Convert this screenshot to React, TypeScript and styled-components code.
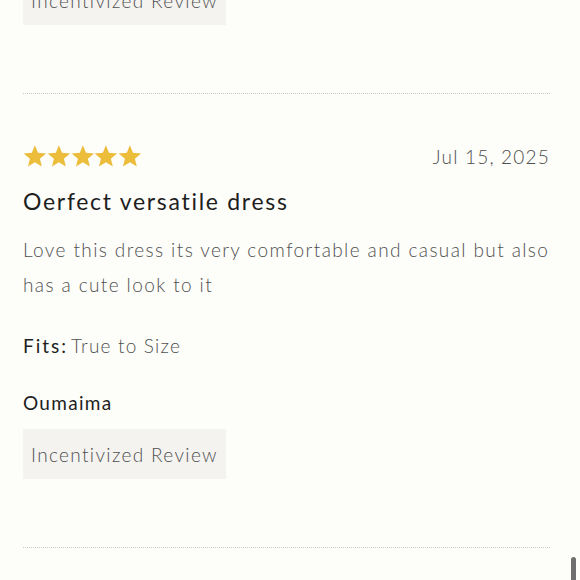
import styled, { createGlobalStyle } from 'styled-components';

const GlobalStyle = createGlobalStyle`
  html, body {
    margin: 0;
    padding: 0;
    background: #fdfdf9;
    overflow: hidden;
  }
  body {
    font-family: Lato, "Noto Sans", sans-serif;
    -webkit-font-smoothing: antialiased;
  }
`;

type Review = {
  date: string;
  title: string;
  body: string;
  fits: string;
  author: string;
};

const review: Review = {
  date: 'Jul 15, 2025',
  title: 'Oerfect versatile dress',
  body: 'Love this dress its very comfortable and casual but also has a cute look to it',
  fits: 'True to Size',
  author: 'Oumaima',
};

const Stars = ({ count }: { count: number }) => (
  <StarRow>
    {Array.from({ length: count }).map((_, i) => (
      <svg key={i} width="24" height="24" viewBox="0 0 24 24">
        <path
          d="M12 1.2l3.1 7.6 8.2.6-6.3 5.3 2 8-7-4.4-7 4.4 2-8L.7 9.4l8.2-.6z"
          fill="#ebbd3b"
        />
      </svg>
    ))}
  </StarRow>
);

const App = () => {
  return (
    <>
      <GlobalStyle />
      <Page>
        <Badge>Incentivized Review</Badge>
        <Divider />
        <ReviewCard>
          <Header>
            <Stars count={5} />
            <DateText>{review.date}</DateText>
          </Header>
          <Title>{review.title}</Title>
          <Body>{review.body}</Body>
          <Fits>
            <strong>Fits:</strong>
            {review.fits}
          </Fits>
          <Author>{review.author}</Author>
          <Badge>Incentivized Review</Badge>
        </ReviewCard>
        <Divider />
      </Page>
      <ScrollThumb />
    </>
  );
};

const Page = styled.div`
  margin-top: -25px;
  padding: 0 30px 0 23px;
  display: flex;
  flex-direction: column;
  align-items: flex-start;
`;

const Divider = styled.hr`
  align-self: stretch;
  margin: 68px 0 0;
  border: none;
  border-top: 1px dotted #c9c9c6;
  height: 0;
`;

const ReviewCard = styled.div`
  align-self: stretch;
  padding-top: 50px;
  display: flex;
  flex-direction: column;
  align-items: flex-start;
`;

const Header = styled.div`
  align-self: stretch;
  display: flex;
  justify-content: space-between;
  align-items: center;
  height: 24px;
`;

const StarRow = styled.div`
  display: flex;
  svg {
    display: block;
    width: 23.8px;
    height: 24px;
  }
`;

const DateText = styled.span`
  font-size: 19px;
  font-weight: 300;
  color: #4f4f4f;
  letter-spacing: 1.2px;
`;

const Title = styled.h2`
  margin: 19px 0 0;
  font-size: 23px;
  font-weight: 400;
  line-height: 28px;
  color: #1e1e1e;
  letter-spacing: 1.7px;
`;

const Body = styled.p`
  margin: 17px 0 0;
  font-size: 19px;
  font-weight: 300;
  line-height: 35px;
  color: #505050;
  letter-spacing: 1.4px;
`;

const Fits = styled.div`
  margin-top: 32px;
  font-size: 19px;
  font-weight: 300;
  line-height: 24px;
  color: #505050;
  letter-spacing: 1.2px;
  strong {
    margin-right: 3px;
    font-weight: 400;
    color: #1e1e1e;
    letter-spacing: 2px;
  }
`;

const Author = styled.div`
  margin-top: 33px;
  font-size: 19px;
  line-height: 24px;
  color: #1e1e1e;
  letter-spacing: 1.3px;
`;

const Badge = styled.div`
  margin-top: 14px;
  height: 50px;
  padding: 0 8px;
  display: flex;
  align-items: center;
  background: #f4f3f0;
  font-size: 19px;
  font-weight: 300;
  color: #505050;
  letter-spacing: 1.35px;
  &:first-child {
    margin-top: 0;
  }
`;

const ScrollThumb = styled.div`
  position: fixed;
  right: 4px;
  top: 557px;
  width: 5px;
  height: 40px;
  border-radius: 3px;
  background: #6f6f6f;
`;

export default App;
